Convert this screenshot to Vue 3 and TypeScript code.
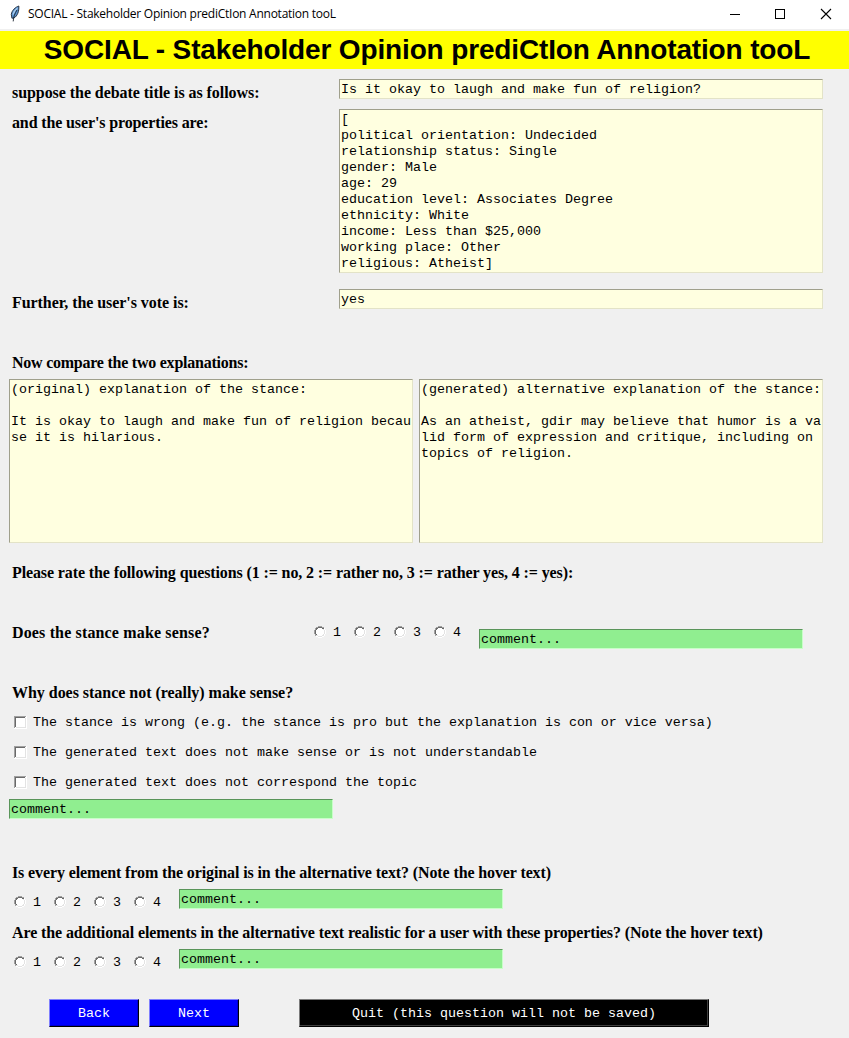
<script setup lang="ts">
import { reactive, ref } from 'vue'

const appTitle = 'SOCIAL - Stakeholder Opinion prediCtIon Annotation tooL'
const debateTitle = 'Is it okay to laugh and make fun of religion?'
const properties = [
  '[',
  'political orientation: Undecided',
  'relationship status: Single',
  'gender: Male',
  'age: 29',
  'education level: Associates Degree',
  'ethnicity: White',
  'income: Less than $25,000',
  'working place: Other',
  'religious: Atheist]',
].join('\n')
const vote = 'yes'
const original =
  '(original) explanation of the stance:\n\nIt is okay to laugh and make fun of religion because it is hilarious.'
const generated =
  '(generated) alternative explanation of the stance:\n\nAs an atheist, gdir may believe that humor is a valid form of expression and critique, including on topics of religion.'

const scale = [1, 2, 3, 4]
const ratings = reactive<Record<string, number>>({ sense: 0, elements: 0, realistic: 0 })
const reasons = ref([
  { text: 'The stance is wrong (e.g. the stance is pro but the explanation is con or vice versa)', checked: false },
  { text: 'The generated text does not make sense or is not understandable', checked: false },
  { text: 'The generated text does not correspond the topic', checked: false },
])
const followUps = [
  { key: 'elements', text: 'Is every element from the original is in the alternative text? (Note the hover text)' },
  { key: 'realistic', text: 'Are the additional elements in the alternative text realistic for a user with these properties? (Note the hover text)' },
]

// Bevel layers of the sunken 12px radio button
const radioLayers = [
  { fill: '#ffffff', d: 'M4 1h4v1h2v2h1v4h-1v2h-2v1h-4v-1h-2v-2h-1v-4h1v-2h2z' },
  { fill: '#ffffff', d: 'M10 2h1v2h-1zM11 4h1v4h-1zM10 8h1v2h-1zM8 10h2v1h-2zM4 11h4v1h-4zM2 10h2v1h-2z' },
  { fill: '#e3e3e3', d: 'M9 3h1v1h-1zM10 4h1v4h-1zM9 8h1v1h-1zM8 9h2v1h-2zM4 10h4v1h-4zM2 9h2v1h-2z' },
  { fill: '#a0a0a0', d: 'M4 0h4v1h-4zM2 1h2v1h-2zM8 1h2v1h-2zM1 2h1v2h-1zM0 4h1v4h-1zM1 8h1v2h-1z' },
  { fill: '#696969', d: 'M4 1h4v1h-4zM2 2h2v1h-2zM8 2h2v1h-2zM2 3h1v1h-1zM1 4h1v4h-1zM2 8h1v1h-1z' },
]
</script>

<template>
  <div class="window">
    <header class="titlebar">
      <svg class="feather" width="12" height="18" viewBox="0 0 12 18">
        <path d="M9.8 1 C6.6 2 2.8 5.4 2.3 9.4 L2.9 13.2 L5 13 C8.4 11 10.2 6.4 9.8 1Z" fill="#5b93cf" stroke="#1c2634" stroke-width="0.9" />
        <path d="M8.4 3 C6 5 4.6 7 4 9.6" fill="none" stroke="#a9cdee" stroke-width="1.2" />
        <path d="M8 5 C6 8.5 4.4 11.5 4.2 16.4" fill="none" stroke="#1b2430" stroke-width="0.9" />
      </svg>
      <span class="caption">{{ appTitle }}</span>
      <svg class="controls" width="110" height="28" viewBox="0 0 110 28" shape-rendering="crispEdges">
        <path d="M0 13.5H10" stroke="#000" />
        <rect x="45.5" y="8.5" width="9" height="9" fill="none" stroke="#000" />
        <path d="M91 8L101 18M101 8L91 18" stroke="#000" stroke-width="1.1" shape-rendering="auto" />
      </svg>
    </header>

    <h1 class="banner"><span>{{ appTitle }}</span></h1>

    <main class="form">
      <div class="row">
        <div class="label lead t-title">suppose the debate title is as follows:</div>
        <div class="field line">{{ debateTitle }}</div>
      </div>
      <div class="row props">
        <div class="label lead t-props">and the user's properties are:</div>
        <div class="field block">{{ properties }}</div>
      </div>
      <div class="row vote">
        <div class="label lead t-title">Further, the user's vote is:</div>
        <div class="field line">{{ vote }}</div>
      </div>

      <div class="row"><div class="label t-compare">Now compare the two explanations:</div></div>
      <div class="row compare">
        <div class="field block">{{ original }}</div>
        <div class="field block">{{ generated }}</div>
      </div>

      <div class="row rate">
        <div class="label t-long">Please rate the following questions (1 := no, 2 := rather no, 3 := rather yes, 4 := yes):</div>
      </div>
      <div class="row sense">
        <div class="label t-sense">Does the stance make sense?</div>
        <div class="radios">
          <label v-for="n in scale" :key="n" class="option" @click="ratings.sense = n">
            <svg width="12" height="12" viewBox="0 0 12 12" shape-rendering="crispEdges">
              <path v-for="(layer, i) in radioLayers" :key="i" :d="layer.d" :fill="layer.fill" />
              <circle v-if="ratings.sense === n" cx="6" cy="6" r="2" />
            </svg>
            <span>{{ n }}</span>
          </label>
        </div>
        <div class="comment" contenteditable="true" spellcheck="false">comment...</div>
      </div>

      <div class="row"><div class="label t-why">Why does stance not (really) make sense?</div></div>
      <label v-for="r in reasons" :key="r.text" class="row check" @click="r.checked = !r.checked">
        <svg width="13" height="13" viewBox="0 0 13 13" shape-rendering="crispEdges">
          <rect width="13" height="13" fill="#fff" />
          <path d="M1.5 11.5H11.5V1.5" fill="none" stroke="#e3e3e3" />
          <path d="M0.5 12V0.5H12" fill="none" stroke="#a0a0a0" />
          <path d="M1.5 11V1.5H11" fill="none" stroke="#696969" />
          <path v-if="r.checked" d="M3.5 6L5.5 8L9.5 4" fill="none" stroke="#000" stroke-width="2" />
        </svg>
        <span>{{ r.text }}</span>
      </label>
      <div class="row reason-note">
        <div class="comment" contenteditable="true" spellcheck="false">comment...</div>
      </div>

      <template v-for="q in followUps" :key="q.key">
        <div class="row"><div class="label t-long">{{ q.text }}</div></div>
        <div class="row follow">
          <div class="radios">
            <label v-for="n in scale" :key="n" class="option" @click="ratings[q.key] = n">
              <svg width="12" height="12" viewBox="0 0 12 12" shape-rendering="crispEdges">
                <path v-for="(layer, i) in radioLayers" :key="i" :d="layer.d" :fill="layer.fill" />
                <circle v-if="ratings[q.key] === n" cx="6" cy="6" r="2" />
              </svg>
              <span>{{ n }}</span>
            </label>
          </div>
          <div class="comment" contenteditable="true" spellcheck="false">comment...</div>
        </div>
      </template>

      <div class="actions">
        <button class="btn nav">Back</button>
        <button class="btn nav">Next</button>
        <button class="btn quit">Quit (this question will not be saved)</button>
      </div>
    </main>
  </div>
</template>

<style>
body {
  margin: 0;
  background: #f0f0f0;
}
</style>

<style scoped>
.window {
  width: 849px;
  height: 1038px;
  overflow: hidden;
  background: #f0f0f0;
  color: #000;
  font: 13.33px/16px "Liberation Mono", monospace;
}
.titlebar {
  display: flex;
  align-items: center;
  height: 29px;
  margin-bottom: 2px;
  padding: 0 9px;
  box-sizing: border-box;
  background: #fff;
}
.feather {
  margin-top: -2px;
}
.caption {
  margin: -2px 0 0 7px;
  font: 12px/16px "Open Sans", "Noto Sans", sans-serif;
  white-space: nowrap;
  letter-spacing: -0.25px;
}
.controls {
  margin-left: auto;
}
.banner {
  height: 38px;
  margin: 0;
  background: #ff0;
  text-align: center;
  font: bold 28px/38px "Liberation Sans", Arial, sans-serif;
  letter-spacing: -0.15px;
  white-space: nowrap;
  padding-left: 5px;
}
.form {
  padding: 8px 26px 0 9px;
}
.row {
  display: flex;
  align-items: flex-start;
  height: 30px;
}
.label {
  padding: 1px 0 0 3px;
  box-sizing: border-box;
  font: bold 16px/30px "Liberation Serif", "Times New Roman", serif;
  white-space: nowrap;
}
.lead {
  width: 330px;
}
.t-title {
  letter-spacing: -0.06px;
}
.t-props {
  letter-spacing: -0.13px;
}
.t-compare {
  letter-spacing: -0.24px;
}
.t-long {
  letter-spacing: -0.115px;
}
.t-sense {
  letter-spacing: 0.15px;
}
.t-why {
  letter-spacing: -0.03px;
}
.field,
.comment {
  box-sizing: border-box;
  margin-top: 2px;
  padding: 2px 1px 0;
  border: 1px solid;
  outline: none;
}
.field {
  background: #ffffe0;
  border-color: #a0a08c #e3e3c7 #e3e3c7 #a0a08c;
  white-space: pre-wrap;
  word-break: break-all;
}
.line {
  width: 484px;
  height: 20px;
}
.block {
  width: 484px;
  height: 164px;
}
.props {
  height: 180px;
}
.vote {
  height: 60px;
}
.compare {
  height: 180px;
  gap: 6px;
}
.compare .block {
  width: 404px;
}
.rate {
  height: 60px;
}
.sense {
  height: 60px;
}
.sense .label {
  width: 305px;
}
.comment {
  width: 324px;
  height: 20px;
  background: #90ee90;
  border-color: #5a955a #c8ffc8 #c8ffc8 #5a955a;
  white-space: pre;
}
.sense .comment {
  margin-top: 12px;
}
.radios {
  display: flex;
  width: 165px;
  padding-left: 5px;
  box-sizing: border-box;
}
.follow .radios {
  width: 170px;
}
.sense .radios {
  padding-left: 0;
}
.option {
  display: flex;
  width: 40px;
  height: 30px;
  align-items: center;
}
.option span {
  margin: 2px 0 0 7px;
}
.check {
  align-items: center;
  padding-left: 5px;
}
.check svg {
  margin-top: 1px;
}
.check span {
  margin: 2px 0 0 6px;
  white-space: nowrap;
}
.reason-note {
  height: 60px;
}
.actions {
  display: flex;
  gap: 10px;
  padding: 22px 0 0 40px;
}
.btn {
  box-sizing: border-box;
  height: 28px;
  padding: 2px 0 0;
  border: 1px solid;
  border-radius: 0;
  color: #fff;
  font: inherit;
}
.nav {
  width: 90px;
  background: #00f;
  border-color: #7f7fff #000 #000 #7f7fff;
  box-shadow: inset -1px -1px 0 #0000d0;
}
.quit {
  width: 410px;
  margin-left: 50px;
  background: #000;
  border-color: #7a7a7a #000 #000 #7a7a7a;
  box-shadow: inset -1px -1px 0 #404040;
}
</style>
